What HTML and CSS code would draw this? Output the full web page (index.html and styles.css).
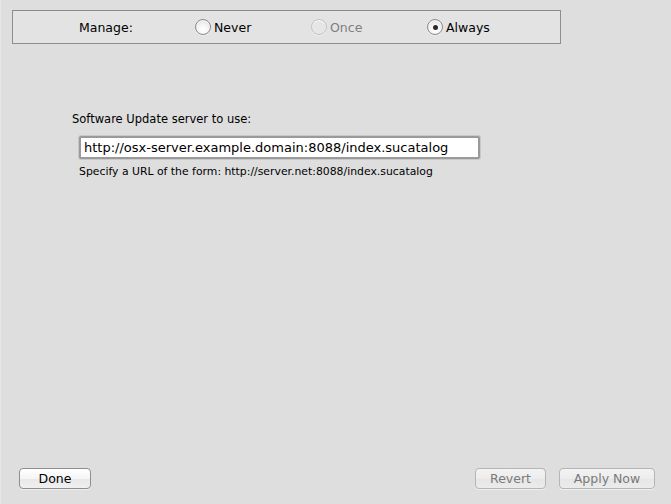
FILE: index.html
```html
<!DOCTYPE html>
<html>
<head>
<meta charset="utf-8">
<link rel="stylesheet" href="styles.css">
</head>
<body>
<div class="window">
  <div class="manage-box">
    <span class="manage-label">Manage:</span>
    <label class="radio"><span class="radio-circle"></span><span class="radio-text">Never</span></label>
    <label class="radio disabled"><span class="radio-circle"></span><span class="radio-text">Once</span></label>
    <label class="radio checked"><span class="radio-circle"><span class="radio-dot"></span></span><span class="radio-text">Always</span></label>
  </div>
  <div class="content">
    <div class="field-label">Software Update server to use:</div>
    <div class="text-field">http://osx-server.example.domain:8088/index.sucatalog</div>
    <div class="hint">Specify a URL of the form: http://server.net:8088/index.sucatalog</div>
  </div>
  <div class="footer">
    <button class="btn btn-done">Done</button>
    <div class="footer-right">
      <button class="btn btn-revert disabled">Revert</button>
      <button class="btn btn-apply disabled">Apply Now</button>
    </div>
  </div>
</div>
</body>
</html>
```
FILE: styles.css
```css
html, body {
  margin: 0;
  padding: 0;
}
body {
  width: 671px;
  height: 504px;
  background: #dedede;
  font-family: "DejaVu Sans", "Liberation Sans", sans-serif;
  color: #000;
  overflow: hidden;
}
.window {
  height: 504px;
  box-sizing: border-box;
  border-left: 1px solid #e6e6e6;
  display: flex;
  flex-direction: column;
}
.manage-box {
  box-sizing: border-box;
  margin: 10px 0 0 11px;
  width: 549px;
  height: 34px;
  border: 1px solid #8e8e8e;
  border-top-color: #8a8a8a;
  background: #e3e3e3;
  display: grid;
  grid-template-columns: 116px 116px 116px 116px;
  align-items: center;
  padding-left: 66px;
}
.manage-label {
  font-size: 12.5px;
}
.radio {
  display: flex;
  align-items: center;
  gap: 3px;
  font-size: 12.5px;
}
.radio-circle {
  width: 14px;
  height: 14px;
  border-radius: 50%;
  border: 1px solid #8a8a8a;
  background: radial-gradient(circle at 50% 70%, #ffffff 0%, #f4f4f4 45%, #d8d8d8 100%);
  box-shadow: inset 0 1px 1px rgba(255,255,255,0.9), 0 1px 0 rgba(255,255,255,0.4);
  display: flex;
  align-items: center;
  justify-content: center;
}
.radio.disabled .radio-circle {
  border-color: #c2c2c2;
  background: #e6e6e6;
}
.radio.disabled .radio-text {
  color: #7f7f7f;
}
.radio-dot {
  width: 5px;
  height: 5px;
  border-radius: 50%;
  background: #2a2a2a;
}
.content {
  flex: 1;
  padding: 0 0 0 71px;
  margin-top: 67px;
}
.field-label {
  font-size: 11.5px;
  line-height: 16px;
}
.text-field {
  margin: 9px 0 0 7px;
  width: 390px;
  height: 17px;
  background: #fff;
  border: 2px solid #9a9a9a;
  border-radius: 2px;
  box-shadow: 0 0 0 1px #c8c8c8;
  padding: 1px 4px 1px 3px;
  font-size: 13px;
  line-height: 17px;
  white-space: nowrap;
}
.hint {
  margin: 6px 0 0 7px;
  font-size: 10.85px;
  line-height: 14px;
}
.footer {
  display: flex;
  justify-content: space-between;
  align-items: center;
  padding: 0 16px 15px 18px;
}
.footer-right {
  display: flex;
  gap: 13px;
}
.btn {
  font-family: "DejaVu Sans", "Liberation Sans", sans-serif;
  font-size: 12.5px;
  height: 21px;
  padding: 0;
  border: 1px solid #8e8e8e;
  border-radius: 4px;
  background: linear-gradient(#ffffff 0%, #f5f5f5 50%, #e8e8e8 51%, #f0f0f0 100%);
  color: #000;
  line-height: 19px;
  box-shadow: 0 1px 0 rgba(255,255,255,0.5);
}
.btn-done { width: 72px; }
.btn-revert { width: 71px; }
.btn-apply { width: 96px; }
.btn.disabled {
  color: #7a7a7a;
  border-color: #b5b5b5;
  background: linear-gradient(#f3f3f3 0%, #ececec 50%, #e6e6e6 51%, #ebebeb 100%);
}
```
